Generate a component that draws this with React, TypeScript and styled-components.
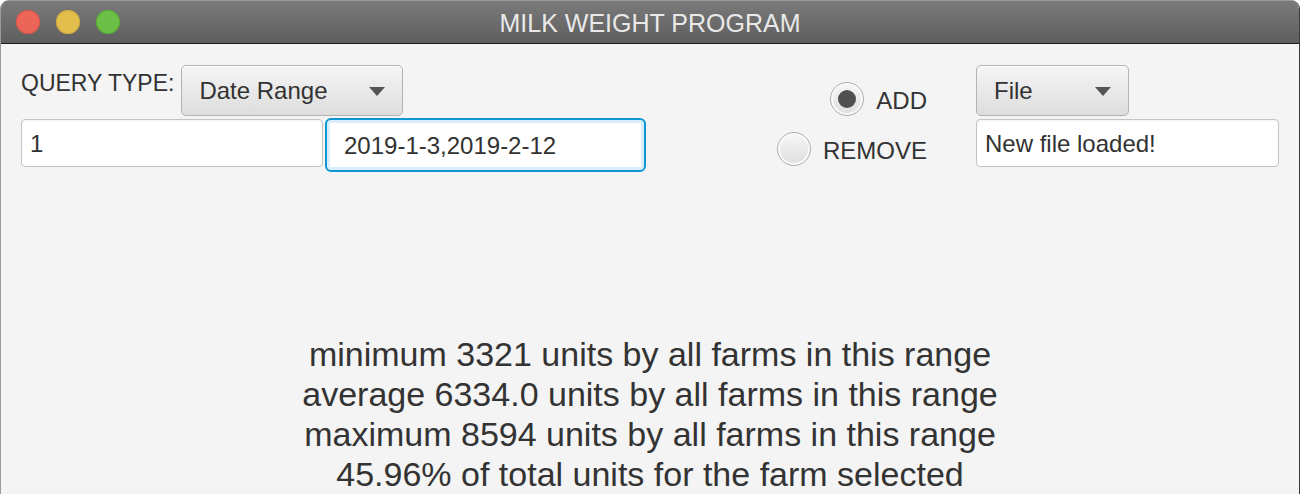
import React from "react";
import styled, { createGlobalStyle } from "styled-components";

const Global = createGlobalStyle`
  html, body { margin: 0; padding: 0; background: #ffffff; }
  body { font-family: "Liberation Sans", Arial, sans-serif; }
  * { box-sizing: border-box; }
`;

const Window = styled.div`
  width: 1300px;
  height: 494px;
  display: flex;
  flex-direction: column;
  overflow: hidden;
  border-top-left-radius: 9px;
  border-top-right-radius: 9px;
  border-right: 1px solid #3c3c3c;
  border-left: 1px solid #9a9a9a;
  background: #f4f4f4;
`;

const TitleBar = styled.div`
  height: 44px;
  flex: none;
  display: grid;
  grid-template-columns: 1fr auto 1fr;
  align-items: center;
  background: linear-gradient(#7b7b7b, #5e5e5e);
  box-shadow: inset 0 1px 0 rgba(255, 255, 255, 0.25);
  border-bottom: 1px solid #1c1c1c;
`;

const Lights = styled.div`
  display: flex;
  gap: 16px;
  padding-left: 15px;
  margin-top: 1px;
`;

const Light = styled.span<{ $c: string; $b: string }>`
  width: 24px;
  height: 24px;
  border-radius: 50%;
  background: ${(p) => p.$c};
  box-shadow: inset 0 0 0 1px ${(p) => p.$b};
`;

const Title = styled.div`
  color: #e9e9e9;
  font-size: 25px;
  line-height: 39px;
  padding-top: 3px;
  white-space: nowrap;
`;

const Content = styled.div`
  flex: 1;
  display: flex;
  flex-direction: column;
  padding: 21px 20px 0 20px;
  color: #323232;
`;

const TopArea = styled.div`
  display: flex;
  align-items: flex-start;
`;

const LeftGroup = styled.div`
  display: flex;
  flex-direction: column;
  gap: 2px;
`;

const Row = styled.div`
  display: flex;
  align-items: flex-start;
`;

const Label = styled.span`
  font-size: 23px;
  line-height: 26px;
  margin-top: 5px;
  margin-right: 7px;
  white-space: nowrap;
`;

const Combo = styled.div<{ $w: number }>`
  width: ${(p) => p.$w}px;
  height: 51px;
  display: flex;
  align-items: center;
  justify-content: space-between;
  padding: 0 17px 0 17px;
  border: 1px solid #b3b3b3;
  border-radius: 5px;
  background: linear-gradient(#f5f5f5, #dddddd);
  box-shadow: inset 0 1px 0 #ffffff;
  font-size: 24px;
  line-height: 27px;
  color: #333333;
`;

const Arrow = styled.span`
  width: 0;
  height: 0;
  border-left: 8px solid transparent;
  border-right: 8px solid transparent;
  border-top: 9px solid #555555;
  margin-top: 2px;
`;

const Field = styled.div<{ $w: number; $focus?: boolean }>`
  width: ${(p) => p.$w}px;
  height: ${(p) => (p.$focus ? 54 : 48)}px;
  margin-top: ${(p) => (p.$focus ? 0 : 1)}px;
  display: flex;
  align-items: center;
  padding-left: ${(p) => (p.$focus ? 17 : 8)}px;
  background: #ffffff;
  border: ${(p) => (p.$focus ? "2px solid #0c97d3" : "1px solid #c4c4c4")};
  border-radius: ${(p) => (p.$focus ? 6 : 4)}px;
  box-shadow: ${(p) =>
    p.$focus ? "inset 0 0 0 3px #d9eef9" : "inset 0 1px 2px rgba(0,0,0,0.06)"};
  font-size: 24px;
  line-height: 27px;
  color: #323232;
  white-space: nowrap;
`;

const FirstField = styled(Field)`
  margin-right: 2px;
`;

const RightGroup = styled.div`
  margin-left: auto;
  display: flex;
  align-items: flex-start;
  gap: 49px;
`;

const RadioColumn = styled.div`
  margin-top: 17px;
  display: flex;
  flex-direction: column;
  align-items: flex-end;
  gap: 16px;
`;

const RadioRow = styled.label`
  display: flex;
  align-items: center;
  gap: 12px;
  height: 34px;
  font-size: 24px;
  line-height: 27px;
  padding-top: 2px;
`;

const RadioCircle = styled.span<{ $on?: boolean }>`
  width: 34px;
  height: 34px;
  margin-top: -2px;
  border-radius: 50%;
  border: 1px solid #b0b0b0;
  background: linear-gradient(#f7f7f7, #dedede);
  box-shadow: inset 0 0 0 2px #fafafa;
  display: flex;
  align-items: center;
  justify-content: center;
  &::after {
    content: "";
    width: 18px;
    height: 18px;
    border-radius: 50%;
    background: #505050;
    display: ${(p) => (p.$on ? "block" : "none")};
  }
`;

const FileColumn = styled.div`
  display: flex;
  flex-direction: column;
  gap: 2px;
`;

const Results = styled.div`
  margin-top: auto;
  text-align: center;
  font-size: 34px;
  line-height: 40px;
  color: #333333;
`;

const ResultLine = styled.div`
  white-space: nowrap;
`;

export default function App() {
  const lines = [
    "minimum 3321 units by all farms in this range",
    "average 6334.0 units by all farms in this range",
    "maximum 8594 units by all farms in this range",
    "45.96% of total units for the farm selected",
  ];
  return (
    <>
      <Global />
      <Window>
        <TitleBar>
          <Lights>
            <Light $c="#ec6559" $b="#d65548" />
            <Light $c="#e2bf4d" $b="#caa73c" />
            <Light $c="#6cbf47" $b="#58a838" />
          </Lights>
          <Title>MILK WEIGHT PROGRAM</Title>
          <div />
        </TitleBar>
        <Content>
          <TopArea>
            <LeftGroup>
              <Row>
                <Label>QUERY TYPE:</Label>
                <Combo $w={222}>
                  <span>Date Range</span>
                  <Arrow />
                </Combo>
              </Row>
              <Row>
                <FirstField $w={302}>1</FirstField>
                <Field $w={321} $focus>
                  2019-1-3,2019-2-12
                </Field>
              </Row>
            </LeftGroup>
            <RightGroup>
              <RadioColumn>
                <RadioRow>
                  <RadioCircle $on />
                  ADD
                </RadioRow>
                <RadioRow>
                  <RadioCircle />
                  REMOVE
                </RadioRow>
              </RadioColumn>
              <FileColumn>
                <Combo $w={153}>
                  <span>File</span>
                  <Arrow />
                </Combo>
                <Field $w={303}>New file loaded!</Field>
              </FileColumn>
            </RightGroup>
          </TopArea>
          <Results>
            {lines.map((l) => (
              <ResultLine key={l}>{l}</ResultLine>
            ))}
          </Results>
        </Content>
      </Window>
    </>
  );
}
